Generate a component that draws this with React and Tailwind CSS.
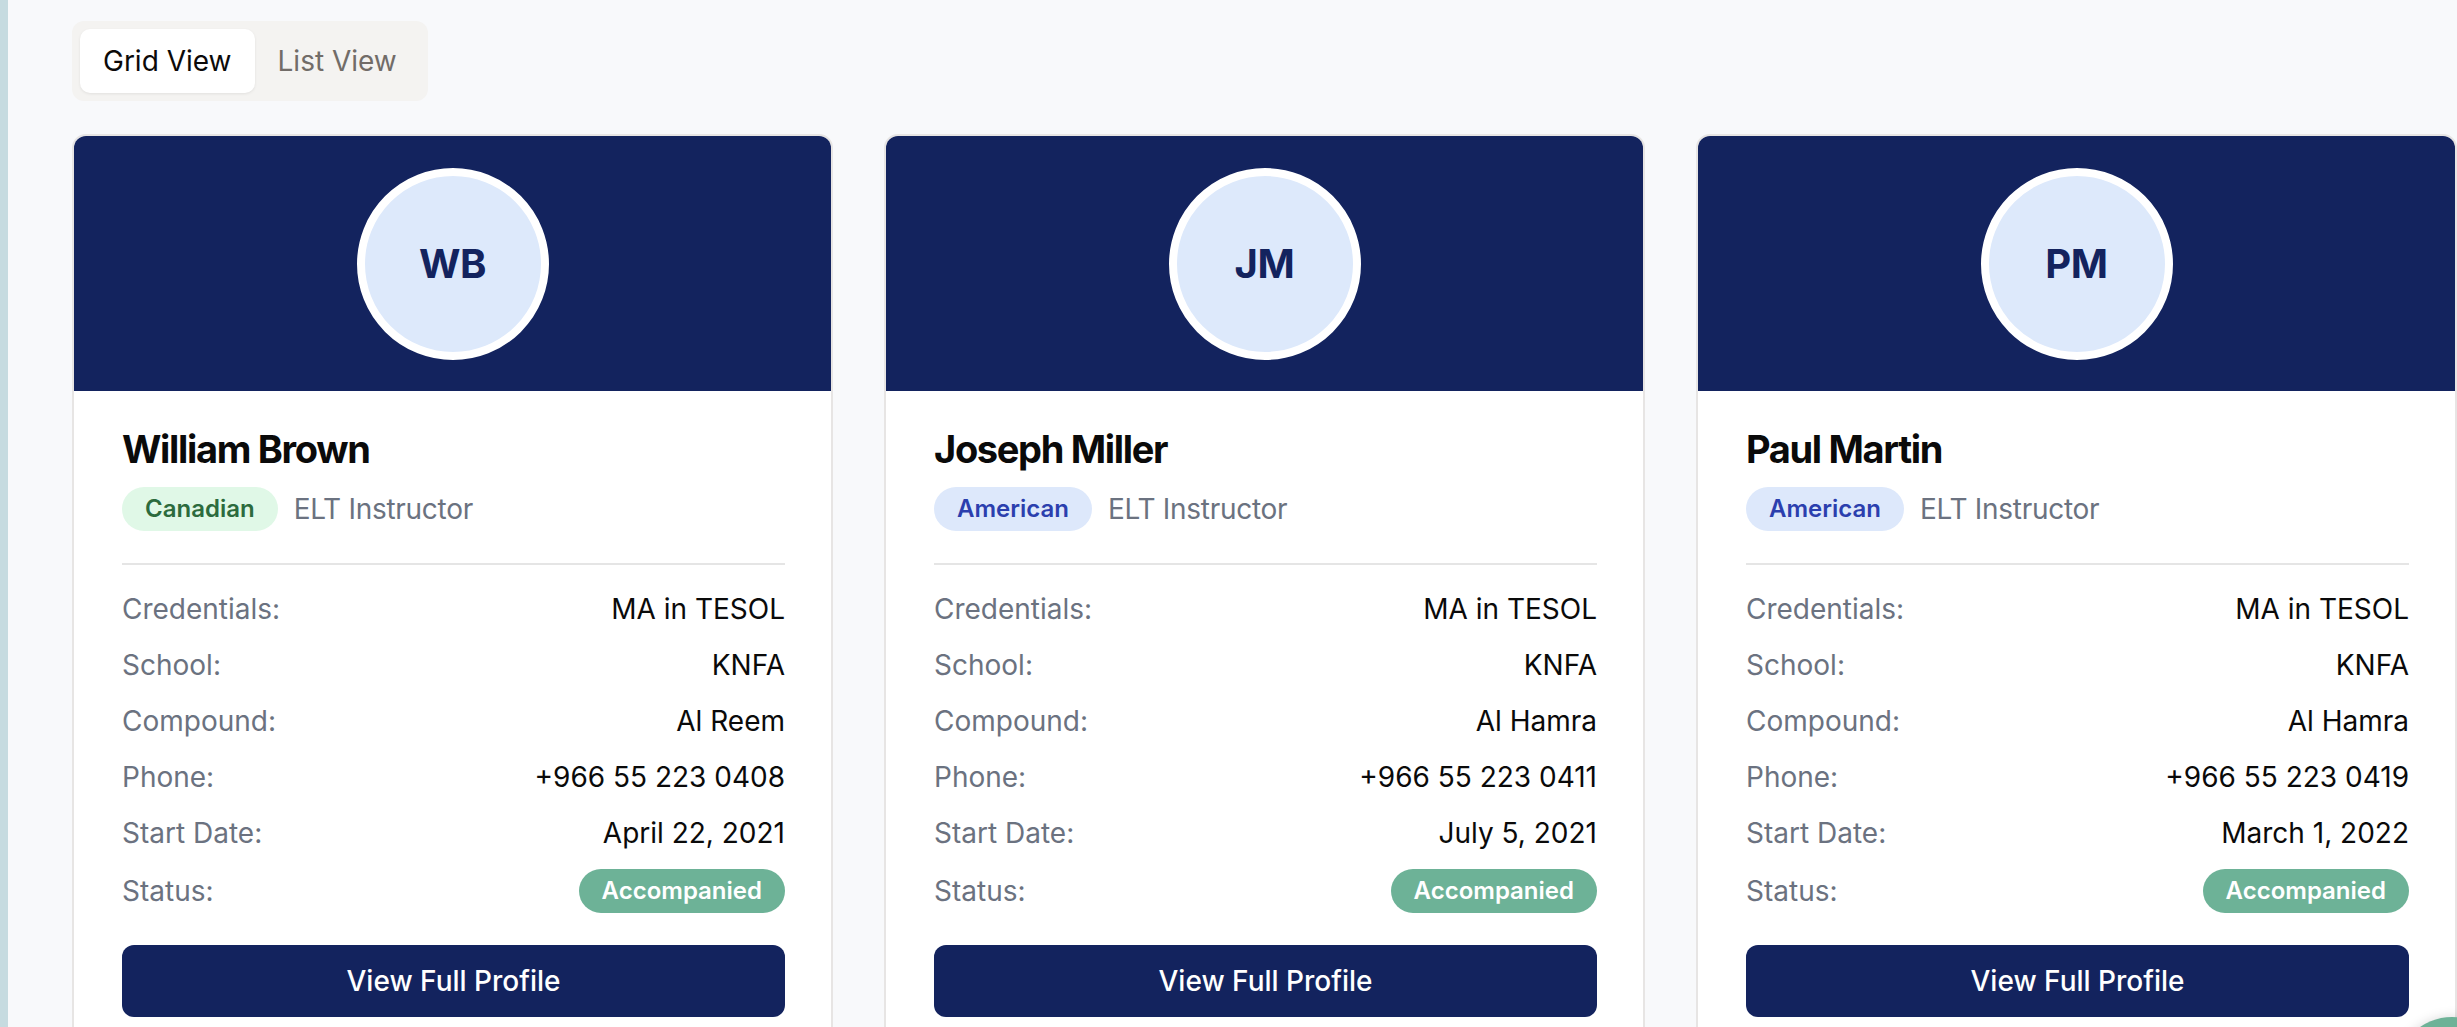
import React from "react";

const people = [
  {
    initials: "WB",
    name: "William Brown",
    nationality: "Canadian",
    natClass: "bg-[#e0f8e7] text-[#2c6b3d]",
    compound: "Al Reem",
    phone: "+966 55 223 0408",
    start: "April 22, 2021",
  },
  {
    initials: "JM",
    name: "Joseph Miller",
    nationality: "American",
    natClass: "bg-[#dde8fb] text-[#2b3fae]",
    compound: "Al Hamra",
    phone: "+966 55 223 0411",
    start: "July 5, 2021",
  },
  {
    initials: "PM",
    name: "Paul Martin",
    nationality: "American",
    natClass: "bg-[#dde8fb] text-[#2b3fae]",
    compound: "Al Hamra",
    phone: "+966 55 223 0419",
    start: "March 1, 2022",
  },
];

function Row({ label, value }) {
  return (
    <div className="flex h-[40px] items-center justify-between text-[28px] leading-[40px]">
      <span className="text-[#6b7280]">{label}</span>
      <span className="text-[#0a0a0a]">{value}</span>
    </div>
  );
}

function Card({ p }) {
  return (
    <div className="w-[761px] shrink-0 overflow-hidden rounded-[14px] border-2 border-[#e7e5e4] bg-white">
      <div className="flex h-[255px] items-center justify-center bg-[#13235e]">
        <div className="flex h-[192px] w-[192px] items-center justify-center rounded-full border-[8px] border-white bg-[#dde9fb]">
          <span className="text-[40px] font-bold leading-none tracking-[-0.01em] text-[#13235e]">{p.initials}</span>
        </div>
      </div>
      <div className="pl-[48px] pr-[46px] pt-[30px] pb-[48px]">
        <div className="text-[38px] font-bold leading-[56px] tracking-[-0.035em] text-[#0a0a0a]">{p.name}</div>
        <div className="mt-[10px] flex items-center gap-[16px]">
          <span className={`flex h-[44px] items-center rounded-full px-[23px] text-[24px] font-semibold ${p.natClass}`}>
            {p.nationality}
          </span>
          <span className="text-[28px] leading-[40px] tracking-[-0.01em] text-[#6b7280]">ELT Instructor</span>
        </div>
        <div className="mt-[32px] h-[2px] bg-[#e5e5e5]" />
        <div className="mt-[24px] flex flex-col gap-[16px]">
          <Row label="Credentials:" value="MA in TESOL" />
          <Row label="School:" value="KNFA" />
          <Row label="Compound:" value={p.compound} />
          <Row label="Phone:" value={p.phone} />
          <Row label="Start Date:" value={p.start} />
          <div className="flex h-[44px] items-center justify-between">
            <span className="text-[28px] leading-[40px] text-[#6b7280]">Status:</span>
            <span className="flex h-[44px] items-center rounded-full bg-[#6db297] px-[23px] text-[24px] font-semibold text-white">
              Accompanied
            </span>
          </div>
        </div>
        <button className="mt-[32px] flex h-[72px] w-full items-center justify-center rounded-[12px] bg-[#13235e] text-[28px] font-medium text-white">
          View Full Profile
        </button>
      </div>
    </div>
  );
}

export default function App() {
  return (
    <div
      className="relative flex h-[1027px] w-[2457px] overflow-hidden bg-[#f8f9fb]"
      style={{ fontFamily: "Inter, 'Noto Sans', sans-serif" }}
    >
      <div className="w-[8px] shrink-0 bg-[#c6dbe0]" />
      <div className="flex-1 pl-[64px] pt-[21px]">
        <div className="inline-flex rounded-[12px] bg-[#f4f3f1] p-[8px]">
          <button className="h-[64px] rounded-[10px] bg-white px-[23px] text-[28px] text-[#0c0a09] shadow-[0_1px_3px_rgba(0,0,0,0.08)]">
            Grid View
          </button>
          <button className="h-[64px] px-[23px] text-[28px] text-[#716c68]">List View</button>
        </div>
        <div className="mt-[33px] flex gap-[51px]">
          {people.map((p) => (
            <Card key={p.initials} p={p} />
          ))}
        </div>
      </div>
      <div className="absolute left-[2396px] top-[1017px] h-[112px] w-[112px] rounded-full bg-[#6db297] shadow-[0_0_12px_rgba(0,0,0,0.15)]" />
    </div>
  );
}
